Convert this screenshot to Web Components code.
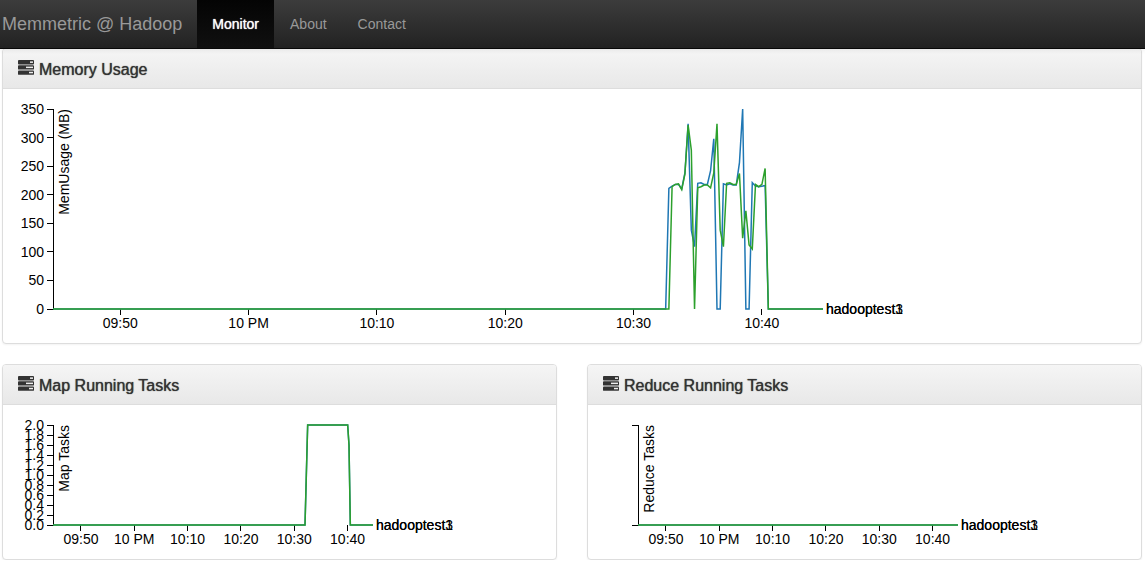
<!DOCTYPE html>
<html lang="en">
<head>
<meta charset="utf-8">
<meta name="viewport" content="width=device-width, initial-scale=1">
<title>Memmetric @ Hadoop</title>
<style>
  body {
    margin: 0;
    background: #fff;
    color: #333;
    font: 14px/20px "Liberation Sans", Arial, sans-serif;
  }
</style>
</head>
<body>
<mm-dashboard></mm-dashboard>

<script>
const define = (name, html, setup) => {
  const template = document.createElement('template');
  template.innerHTML = html;
  customElements.define(name, class extends HTMLElement {
    constructor() {
      super();
      this.attachShadow({ mode: 'open' }).append(template.content.cloneNode(true));
    }
    connectedCallback() { if (setup) setup(this, this.shadowRoot); }
  });
};

define('mm-nav-link', `
  <style>
    :host { display: block; }
    a {
      display: block;
      padding: 14px 15px;
      color: #999;
      text-decoration: none;
    }
    :host([active]) a {
      color: #fff;
      background: linear-gradient(#040404, #101010);
      text-shadow: 0 0 1px #fff;
    }
  </style>
  <a href="#"><slot></slot></a>`);

define('mm-navbar', `
  <style>
    :host {
      display: block;
      position: sticky;
      top: 0;
      z-index: 1;
      background: linear-gradient(#3c3c3c, #222);
      border-bottom: 1px solid #080808;
      box-shadow: 0 1px 5px rgba(0, 0, 0, .08);
    }
    nav { display: flex; gap: 1px; }
    .brand {
      padding: 14px 14px 14px 2px;
      color: #999;
      font-size: 18px;
      text-decoration: none;
      white-space: nowrap;
    }
  </style>
  <nav>
    <a class="brand" href="#"><slot name="brand"></slot></a>
    <slot></slot>
  </nav>`);

define('mm-tasks-icon', `
  <style>
    :host { display: block; width: 16px; height: 15px; }
    svg { display: block; }
  </style>
  <svg width="16" height="15" viewBox="0 0 16 15" fill="#333" aria-hidden="true">
    <rect x="0" y="0" width="16" height="4.4" rx=".9"/>
    <rect x="0" y="5.2" width="16" height="4.4" rx=".9"/>
    <rect x="0" y="10.4" width="16" height="4.4" rx=".9"/>
    <g fill="#eee">
      <rect x="12" y="1.4" width="3" height="1.5"/>
      <rect x="8" y="6.6" width="7" height="1.5"/>
      <rect x="11" y="11.8" width="4" height="1.5"/>
    </g>
  </svg>`);

define('mm-panel', `
  <style>
    :host {
      display: block;
      min-width: 0;
      box-sizing: border-box;
      border: 1px solid #ddd;
      border-radius: 4px;
      background: #fff;
      box-shadow: 0 1px 2px rgba(0, 0, 0, .05);
    }
    header {
      display: flex;
      align-items: flex-start;
      gap: 5px;
      padding: 11px 15px 9px;
      border-bottom: 1px solid #ddd;
      border-radius: 3px 3px 0 0;
      background: linear-gradient(#f5f5f5, #e8e8e8);
    }
    h3 {
      margin: 0;
      font-size: 16px;
      line-height: 19px;
      font-weight: 400;
      text-shadow: 0 0 1px #333;
    }
    .body { padding-bottom: 4px; overflow: hidden; }
  </style>
  <header><mm-tasks-icon></mm-tasks-icon><h3><slot name="title"></slot></h3></header>
  <div class="body"><slot></slot></div>`);

/* Samples are taken every 15 seconds; x positions are minutes since the start of the hour shown. */
const series = (start, values) => [[0, 0], ...values.map((v, i) => [start + i / 4, v]), [60, 0]];
const mapTasks = series(47.25, [0, 1, ...Array(31).fill(2), 1.6, 0]);
const idle = [[0, 0], [60, 0]];
const metrics = {
  memory: {
    label: 'MemUsage (MB)', width: 900, height: 250, max: 350,
    ticks: [0, 50, 100, 150, 200, 250, 300, 350], digits: 0,
    lines: [
      series(47.74, [0, 211, 215, 218, 218, 210, 238, 324, 138, 109, 220, 221, 218, 218, 242, 298, 0, 0,
        219, 217, 219, 217, 217, 256, 350, 0, 0, 221, 215, 214, 215, 216, 0]),
      series(47.74, [0, 0, 214, 218, 219, 209, 236, 322, 278, 0, 212, 214, 217, 217, 212, 238, 324, 138,
        109, 220, 221, 218, 218, 237, 124, 172, 112, 105, 218, 214, 218, 246, 0])
    ]
  },
  map: {
    label: 'Map Tasks', width: 450, height: 150, max: 2,
    ticks: [0, .2, .4, .6, .8, 1, 1.2, 1.4, 1.6, 1.8, 2], digits: 1,
    lines: [mapTasks, mapTasks]
  },
  reduce: {
    label: 'Reduce Tasks', width: 450, height: 150, max: 1,
    ticks: [], digits: 0, lines: [idle, idle]
  }
};
const colors = ['#1f77b4', '#2ca02c'];
const hosts = ['hadooptest1', 'hadooptest3'];
const times = ['09:50', '10 PM', '10:10', '10:20', '10:30', '10:40'];

define('mm-chart', `
  <style>
    :host { display: block; }
    svg { display: block; overflow: hidden; font-size: 14px; fill: #000; }
    .axis { fill: none; stroke: #000; shape-rendering: crispEdges; }
    .line { fill: none; stroke-width: 1.5px; }
    .end { text-anchor: end; }
    .middle { text-anchor: middle; }
  </style>
  <svg role="img"></svg>`, (host, root) => {
  const m = metrics[host.getAttribute('metric')];
  const w = m.width - 130, h = m.height - 50;
  const x = t => t / 60 * w, y = v => h - v / m.max * h;
  const svg = root.querySelector('svg');
  svg.setAttribute('width', m.width);
  svg.setAttribute('height', m.height);
  svg.setAttribute('aria-label', m.label);
  const xAxis = times.map((t, i) => {
    const px = x(5.24 + i * 10);
    return `<path class="axis" d="M${px},0V6"/><text class="middle" x="${px}" y="19">${t}</text>`;
  }).join('');
  const yAxis = m.ticks.map(v =>
    `<path class="axis" d="M-6,${y(v)}H0"/><text class="end" x="-9" y="${y(v) + 5}">${v.toFixed(m.digits)}</text>`).join('');
  const lines = m.lines.map((points, i) =>
    `<path class="line" stroke="${colors[i]}" d="M${points.map(([t, v]) => x(t) + ',' + y(v)).join('L')}"/>
     <text x="${w + 3}" y="${h + 5}">${hosts[i]}</text>`).join('');
  svg.innerHTML = `<g transform="translate(50,20)">
    <g transform="translate(0,${h})">${xAxis}</g>
    ${yAxis}<path class="axis" d="M-6,0H0V${h}H-6"/>
    <text class="end" transform="rotate(-90)" y="16">${m.label}</text>
    ${lines}</g>`;
});

define('mm-dashboard', `
  <style>
    :host { display: block; }
    main {
      display: grid;
      grid-template-columns: 1fr 1fr;
      gap: 20px 30px;
      margin-top: -1px;
      padding: 0 3px 0 2px;
    }
    .wide { grid-column: 1 / -1; }
  </style>
  <mm-navbar>
    <span slot="brand">Memmetric @ Hadoop</span>
    <mm-nav-link active>Monitor</mm-nav-link>
    <mm-nav-link>About</mm-nav-link>
    <mm-nav-link>Contact</mm-nav-link>
  </mm-navbar>
  <main>
    <mm-panel class="wide"><span slot="title">Memory Usage</span><mm-chart metric="memory"></mm-chart></mm-panel>
    <mm-panel><span slot="title">Map Running Tasks</span><mm-chart metric="map"></mm-chart></mm-panel>
    <mm-panel><span slot="title">Reduce Running Tasks</span><mm-chart metric="reduce"></mm-chart></mm-panel>
  </main>`);
</script>
</body>
</html>
